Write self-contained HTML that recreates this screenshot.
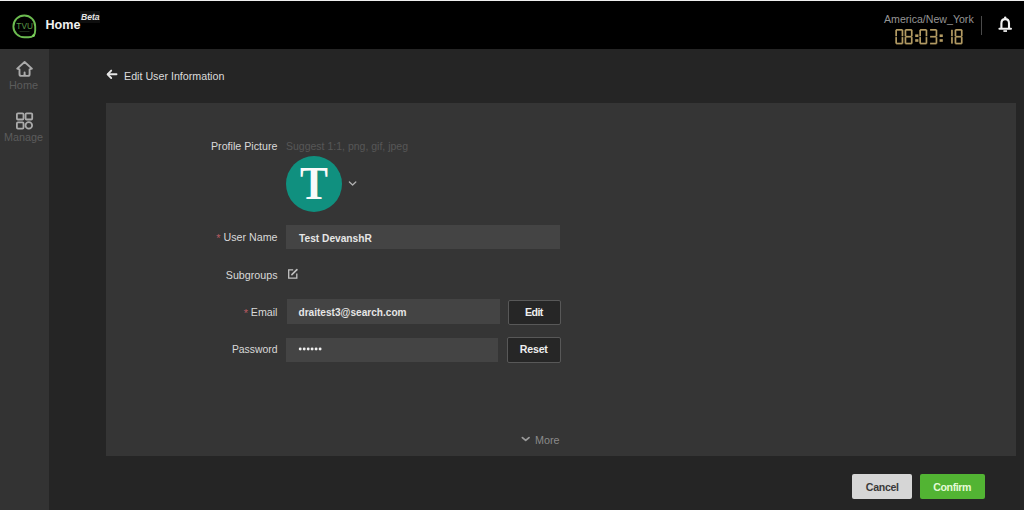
<!DOCTYPE html>
<html><head><meta charset="utf-8">
<style>
*{margin:0;padding:0;box-sizing:border-box}
html,body{width:1024px;height:510px;overflow:hidden;background:#252525;font-family:"Liberation Sans",sans-serif}
.a{position:absolute}
.t{position:absolute;white-space:nowrap;line-height:1}
.r{text-align:right}
#topline{left:0;top:0;width:1024px;height:1px;background:#eeeeee}
#header{left:0;top:1px;width:1024px;height:48px;background:#000}
#side{left:0;top:49px;width:49px;height:461px;background:#333333}
#panel{left:106px;top:103px;width:910px;height:353px;background:#353535}
.lbl{color:#d9d9d9;font-size:10.7px;width:120px}
.inp{background:#444444}
.btn{background:#262626;border:1px solid #585858;border-radius:2px}
</style></head><body>
<div class="a" id="topline"></div>
<div class="a" id="header"></div>
<div class="a" id="side"></div>

<!-- logo -->
<svg class="a" style="left:8px;top:10px" width="34" height="32" viewBox="8 10 34 32">
  <path d="M13.4 26.4 A10.9 10.9 0 0 1 35.2 26.4 V30.5 Q35.2 37.3 28.5 37.3 H24.3 A10.9 10.9 0 0 1 13.4 26.4 Z" fill="none" stroke="#6cbb50" stroke-width="1.9"/>
  <text x="24.6" y="29.2" text-anchor="middle" font-family="Liberation Sans" font-size="8.3" fill="#5a9a46" textLength="16.5" lengthAdjust="spacingAndGlyphs">TVU</text>
  <rect x="19.5" y="31" width="10" height="0.7" fill="#2a3f24"/>
  <circle cx="33.6" cy="35.6" r="1.3" fill="#7fd65e"/>
</svg>
<div class="t" style="left:45.5px;top:19px;font-size:12.6px;font-weight:bold;color:#f0f0f0">Home</div>
<div class="a" style="left:80px;top:11px;width:20px;height:12px;background:#0e0e0e"></div>
<div class="t" style="left:81px;top:13px;font-size:8.6px;font-style:italic;font-weight:bold;color:#e4e4e4">Beta</div>

<!-- header right -->
<div class="t" style="left:884px;top:13.6px;font-size:10.6px;color:#959595">America/New_York</div>
<div class="a" style="left:981px;top:16px;width:1px;height:19px;background:#4a4a4a"></div>


<!-- clock -->
<svg class="a" style="left:890px;top:26px" width="80" height="22" viewBox="0 0 80 22" fill="#b39b63"><rect x="6.10" y="3.00" width="6.40" height="1.70"/><rect x="11.60" y="3.80" width="1.70" height="6.50"/><rect x="11.60" y="11.10" width="1.70" height="6.50"/><rect x="6.10" y="16.70" width="6.40" height="1.70"/><rect x="5.30" y="11.10" width="1.70" height="6.50"/><rect x="5.30" y="3.80" width="1.70" height="6.50"/><rect x="15.40" y="3.00" width="6.40" height="1.70"/><rect x="20.90" y="3.80" width="1.70" height="6.50"/><rect x="20.90" y="11.10" width="1.70" height="6.50"/><rect x="15.40" y="16.70" width="6.40" height="1.70"/><rect x="14.60" y="11.10" width="1.70" height="6.50"/><rect x="14.60" y="3.80" width="1.70" height="6.50"/><rect x="15.40" y="9.85" width="6.40" height="1.70"/><rect x="30.10" y="3.00" width="6.40" height="1.70"/><rect x="35.60" y="3.80" width="1.70" height="6.50"/><rect x="35.60" y="11.10" width="1.70" height="6.50"/><rect x="30.10" y="16.70" width="6.40" height="1.70"/><rect x="29.30" y="11.10" width="1.70" height="6.50"/><rect x="29.30" y="3.80" width="1.70" height="6.50"/><rect x="40.10" y="3.00" width="6.40" height="1.70"/><rect x="45.60" y="3.80" width="1.70" height="6.50"/><rect x="45.60" y="11.10" width="1.70" height="6.50"/><rect x="40.10" y="16.70" width="6.40" height="1.70"/><rect x="40.10" y="9.85" width="6.40" height="1.70"/><rect x="61.10" y="3.80" width="1.70" height="6.50"/><rect x="61.10" y="11.10" width="1.70" height="6.50"/><rect x="65.40" y="3.00" width="6.40" height="1.70"/><rect x="70.90" y="3.80" width="1.70" height="6.50"/><rect x="70.90" y="11.10" width="1.70" height="6.50"/><rect x="65.40" y="16.70" width="6.40" height="1.70"/><rect x="64.60" y="11.10" width="1.70" height="6.50"/><rect x="64.60" y="3.80" width="1.70" height="6.50"/><rect x="65.40" y="9.85" width="6.40" height="1.70"/><rect x="25.20" y="8.40" width="3.2" height="2.6"/><rect x="25.20" y="13.20" width="3.2" height="2.6"/><rect x="49.60" y="8.40" width="3.2" height="2.6"/><rect x="49.60" y="13.20" width="3.2" height="2.6"/></svg>
<!-- bell -->
<svg class="a" style="left:996px;top:14px" width="18" height="20" viewBox="996 14 18 20" fill="none" stroke="#f2f2f2" stroke-width="1.9">
  <path d="M1001.4 28.3 V23.4 Q1001.4 19.1 1005.2 19.1 Q1009 19.1 1009 23.4 V28.3" stroke-width="2.1"/>
  <path d="M999.4 28.8 H1011" stroke-linecap="round" stroke-width="2"/>
  <circle cx="1005.2" cy="17.6" r="1.2" fill="#f2f2f2" stroke="none"/>
  <rect x="1003.4" y="30.2" width="3.6" height="1.7" fill="#f2f2f2" stroke="none"/>
</svg>
<!-- sidebar icons -->
<svg class="a" style="left:0;top:50px" width="48" height="90" viewBox="0 50 48 90" fill="none" stroke="#ababab" stroke-width="1.8" stroke-linejoin="round" stroke-linecap="round">
  <path d="M19.5 74.2 V69.3 L17.2 68.6 L24.6 62 L31.9 68.6 L29.6 69.3 V74.2 Q29.6 75.9 27.9 75.9 H26.3 Q24.6 75.9 24.6 74.2 V72.4 V74.2 Q24.6 75.9 22.9 75.9 H21.2 Q19.5 75.9 19.5 74.2 Z" stroke-width="1.9"/>
  <rect x="16.9" y="113.3" width="6.6" height="6.2" rx="1"/>
  <rect x="25.6" y="113.3" width="6.6" height="6.2" rx="1"/>
  <rect x="16.9" y="122.4" width="6.6" height="6.2" rx="1"/>
  <circle cx="28.8" cy="125.4" r="3.3"/>
</svg>
<!-- back arrow -->
<svg class="a" style="left:100px;top:64px" width="24" height="20" viewBox="100 64 24 20" fill="none" stroke="#e6e6e6" stroke-width="1.9" stroke-linecap="round" stroke-linejoin="round">
  <path d="M111.2 70.6 L107.6 74.3 L111.2 78"/>
  <path d="M108 74.3 H116.5"/>
</svg>
<!-- title -->
<div class="t" style="left:124px;top:71px;font-size:10.7px;color:#dcdcdc">Edit User Information</div>

<div class="a" id="panel"></div>

<!-- labels -->
<div class="t lbl r" style="left:157.5px;top:140.5px">Profile Picture</div>
<div class="t" style="left:286px;top:140.5px;font-size:10.5px;color:#575757">Suggest 1:1, png, gif, jpeg</div>
<div class="a" style="left:286px;top:156px;width:56px;height:56px;border-radius:50%;background:#10907f"></div>
<div class="t lbl r" style="left:157.5px;top:232.3px">User Name</div>
<div class="t" style="left:216.2px;top:233px;font-size:11px;color:#b85a62">*</div>
<div class="a inp" style="left:286px;top:225px;width:274px;height:24px"></div>
<div class="t" style="left:299px;top:233.7px;font-size:10.2px;font-weight:bold;color:#e6e6e6">Test DevanshR</div>
<div class="t lbl r" style="left:157.5px;top:269.7px">Subgroups</div>
<div class="t lbl r" style="left:157.5px;top:306.8px">Email</div>
<div class="t" style="left:243.8px;top:307.5px;font-size:11px;color:#b85a62">*</div>
<div class="a inp" style="left:287px;top:299px;width:213px;height:25px"></div>
<div class="t" style="left:298.5px;top:308px;font-size:10.1px;font-weight:bold;color:#e6e6e6">draitest3@search.com</div>
<div class="a btn" style="left:508px;top:300px;width:53px;height:25px"></div>
<div class="t" style="left:525px;top:307.2px;font-size:10.6px;font-weight:bold;letter-spacing:-0.55px;color:#eee">Edit</div>
<div class="t lbl r" style="left:157.5px;top:345.2px;font-size:10.4px">Password</div>
<div class="a inp" style="left:286px;top:338px;width:212px;height:24px"></div>
<div class="a btn" style="left:507px;top:337px;width:54px;height:26px"></div>
<div class="t" style="left:519.8px;top:344.3px;font-size:10.6px;font-weight:bold;letter-spacing:-0.2px;color:#eee">Reset</div>
<div class="t" style="left:535px;top:434.8px;font-size:10.8px;color:#8a8a8a">More</div>


<div class="t" style="left:300.4px;top:160.8px;font-family:'Liberation Serif',serif;font-weight:bold;font-size:46px;color:#fafafa;transform:scaleX(0.91);transform-origin:0 0">T</div>
<svg class="a" style="left:344px;top:176px" width="16" height="14" viewBox="344 176 16 14" fill="none" stroke="#b0b0b0" stroke-width="1.3" stroke-linecap="round" stroke-linejoin="round">
  <path d="M349.4 182 L352.6 185 L355.8 182"/>
</svg>
<svg class="a" style="left:284px;top:264px" width="18" height="18" viewBox="284 264 18 18" fill="none" stroke="#c2c2c2" stroke-width="1.3" stroke-linejoin="miter">
  <path d="M293.2 269.9 H288.7 V278.2 H296.8 V273.6"/>
  <path d="M296.9 269.6 L291.9 274.6" stroke-width="1.6" stroke-linecap="round"/>
</svg>
<svg class="a" style="left:296px;top:345px" width="30" height="8" viewBox="296 345 30 8" fill="#f0f0f0">
  <circle cx="300.2" cy="349" r="1.45"/><circle cx="304.2" cy="349" r="1.45"/><circle cx="308.2" cy="349" r="1.45"/><circle cx="312.1" cy="349" r="1.45"/><circle cx="316.1" cy="349" r="1.45"/><circle cx="320.1" cy="349" r="1.45"/>
</svg>
<svg class="a" style="left:518px;top:432px" width="16" height="12" viewBox="518 432 16 12" fill="none" stroke="#9a9a9a" stroke-width="1.8" stroke-linecap="round" stroke-linejoin="round">
  <path d="M522.4 437.6 L525.7 440.4 L529 437.6"/>
</svg>
<!-- footer buttons -->
<div class="a" style="left:852px;top:474px;width:60px;height:25px;background:#d6d6d6;border-radius:2px"></div>
<div class="t" style="left:865.8px;top:482.2px;font-size:10.6px;font-weight:bold;letter-spacing:-0.3px;color:#3a3a3a">Cancel</div>
<div class="a" style="left:920px;top:474px;width:65px;height:25px;background:#52b433;border-radius:2px"></div>
<div class="t" style="left:933.3px;top:482.2px;font-size:10.6px;font-weight:bold;letter-spacing:-0.42px;color:#e4fbd6">Confirm</div>

<!-- sidebar text -->
<div class="t" style="left:9px;top:80px;font-size:10.9px;color:#5c5c5c">Home</div>
<div class="t" style="left:4px;top:132px;font-size:10.8px;color:#5c5c5c">Manage</div>
</body></html>
